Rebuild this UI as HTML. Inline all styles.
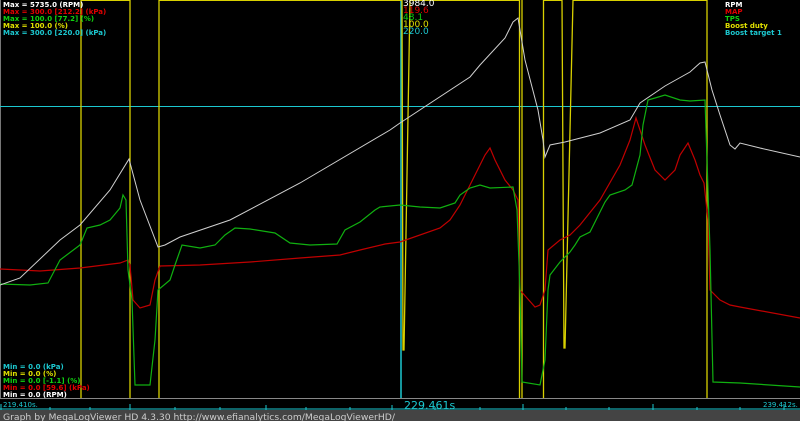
<!DOCTYPE html>
<html><head><style>
html,body{margin:0;padding:0;background:#000;width:800px;height:421px;overflow:hidden}
svg{display:block}
text{font-family:"DejaVu Sans","Liberation Sans",sans-serif}
</style></head><body>
<svg width="800" height="421" viewBox="0 0 800 421" xmlns="http://www.w3.org/2000/svg">
<rect width="800" height="421" fill="#000"/>
<line x1="0.5" y1="0" x2="0.5" y2="398" stroke="#777"/>
<line x1="0" y1="106.5" x2="800" y2="106.5" stroke="#1cc8d0"/>
<line x1="401" y1="0" x2="401" y2="410" stroke="#1cc8d0" stroke-width="1.5"/>
<g stroke="#d8d000" fill="none" stroke-width="1.3">
<line x1="81" y1="0" x2="81" y2="398"/>
<line x1="130" y1="0" x2="130" y2="398"/>
<line x1="159" y1="0" x2="159" y2="398"/>
<polyline points="402,0 403,350 404,350 410,0"/>
<line x1="519.5" y1="0" x2="519.5" y2="398"/>
<line x1="522" y1="0" x2="522" y2="398"/>
<line x1="543.5" y1="0" x2="543.5" y2="398"/>
<polyline points="562,0 564,348 565,348 573,0"/>
<line x1="707" y1="0" x2="707" y2="398"/>
</g>
<g stroke="#d8d000" stroke-width="1">
<line x1="81" y1="0.5" x2="130" y2="0.5"/>
<line x1="159" y1="0.5" x2="402" y2="0.5"/>
<line x1="410" y1="0.5" x2="519" y2="0.5"/>
<line x1="544" y1="0.5" x2="562" y2="0.5"/>
<line x1="573" y1="0.5" x2="707" y2="0.5"/>
</g>
<polyline fill="none" stroke="#c00000" stroke-width="1.2" points="0,269 40,271 80,268 120,263 128,260 130,265 133,300 140,308 150,305 155,280 160,266 200,265 250,262 300,258 340,255 360,250 385,244 400,242 440,228 450,220 460,205 470,185 485,155 490,148 495,160 505,180 513,190 518,200 520,290 527,298 535,307 540,305 545,290 548,250 560,240 570,235 580,225 600,200 620,165 630,140 636,118 645,145 655,170 665,180 675,170 680,155 688,143 695,160 700,175 704,183 708,220 710,290 720,300 730,305 740,307 800,318"/>
<polyline fill="none" stroke="#10b010" stroke-width="1.2" points="0,284 30,285 48,283 60,260 80,245 87,228 100,225 110,220 120,208 123,195 126,200 128,270 132,300 135,385 150,385 155,340 158,290 170,280 175,265 182,245 200,248 215,245 225,235 235,228 250,229 275,233 290,243 310,245 337,244 345,230 360,222 375,210 380,207 400,205 420,207 440,208 455,203 460,195 470,188 480,185 490,188 513,187 517,210 520,290 522,382 540,385 545,360 548,290 550,275 560,262 570,252 575,245 580,237 590,232 600,212 605,202 610,195 625,190 632,185 640,155 643,125 648,100 655,98 665,95 680,100 690,101 705,100 707,160 710,250 713,382 740,383 800,387"/>
<polyline fill="none" stroke="#d0d0d0" stroke-width="1" points="0,285 20,278 60,240 80,225 110,190 129,159 140,200 158,247 165,245 180,237 230,220 300,183 390,130 400,123 470,77 480,65 505,38 513,22 518,18 525,60 538,110 543,140 545,157 550,145 565,142 600,133 630,120 640,103 665,86 690,72 700,63 705,62 712,90 720,115 730,145 735,149 740,143 760,148 800,157"/>
<line x1="0" y1="398.5" x2="800" y2="398.5" stroke="#888"/>
<rect x="0" y="399" width="800" height="11" fill="#000"/>
<g stroke="#1cc8d0">
<line x1="0" y1="409" x2="800" y2="409"/>
<line x1="1" y1="404" x2="1" y2="410"/><line x1="130" y1="404" x2="130" y2="410"/><line x1="266" y1="405" x2="266" y2="410"/>
<line x1="50" y1="407" x2="50" y2="410"/><line x1="90" y1="407" x2="90" y2="410"/><line x1="175" y1="407" x2="175" y2="410"/><line x1="220" y1="407" x2="220" y2="410"/><line x1="306" y1="407" x2="306" y2="410"/><line x1="350" y1="407" x2="350" y2="410"/><line x1="392" y1="405" x2="392" y2="410"/>
<line x1="435" y1="407" x2="435" y2="410"/><line x1="480" y1="407" x2="480" y2="410"/><line x1="523" y1="404" x2="523" y2="410"/><line x1="566" y1="407" x2="566" y2="410"/><line x1="609" y1="407" x2="609" y2="410"/><line x1="653" y1="404" x2="653" y2="410"/><line x1="697" y1="407" x2="697" y2="410"/><line x1="740" y1="407" x2="740" y2="410"/><line x1="784" y1="404" x2="784" y2="410"/>
</g>
<text x="3" y="407" font-size="7" fill="#1cc8d0">219.410s.</text>
<text x="404" y="409" font-size="11" fill="#1cc8d0">229.461s</text>
<text x="763" y="407" font-size="7" fill="#1cc8d0">239.412s.</text>
<rect x="0" y="410" width="800" height="11" fill="#444"/>
<text x="3" y="420" font-size="9.2" fill="#ccc" textLength="392" lengthAdjust="spacingAndGlyphs">Graph by MegaLogViewer HD 4.3.30 http://www.efianalytics.com/MegaLogViewerHD/</text>
<g font-size="7" font-weight="bold">
<text x="3" y="7" fill="#fff">Max = 5735.0 (RPM)</text>
<text x="3" y="14" fill="#e00000">Max = 300.0 [212.2] (kPa)</text>
<text x="3" y="21" fill="#10d010">Max = 100.0 [77.2] (%)</text>
<text x="3" y="28" fill="#e0e000">Max = 100.0 (%)</text>
<text x="3" y="35" fill="#1cc8d0">Max = 300.0 [220.0] (kPa)</text>
<text x="3" y="369" fill="#1cc8d0">Min = 0.0 (kPa)</text>
<text x="3" y="376" fill="#e0e000">Min = 0.0 (%)</text>
<text x="3" y="383" fill="#10d010">Min = 0.0 [-1.1] (%)</text>
<text x="3" y="390" fill="#e00000">Min = 0.0 [59.6] (kPa)</text>
<text x="3" y="397" fill="#fff">Min = 0.0 (RPM)</text>
<text x="725" y="7" fill="#fff">RPM</text>
<text x="725" y="14" fill="#e00000">MAP</text>
<text x="725" y="21" fill="#10d010">TPS</text>
<text x="725" y="28" fill="#e0e000">Boost duty</text>
<text x="725" y="35" fill="#1cc8d0">Boost target 1</text>
</g>
<g font-size="9">
<text x="403" y="6" fill="#fff">3984.0</text>
<text x="403" y="13" fill="#e00000">119.6</text>
<text x="403" y="20" fill="#10d010">48.1</text>
<text x="403" y="27" fill="#e0e000">100.0</text>
<text x="403" y="34" fill="#1cc8d0">220.0</text>
</g>
</svg>
</body></html>
